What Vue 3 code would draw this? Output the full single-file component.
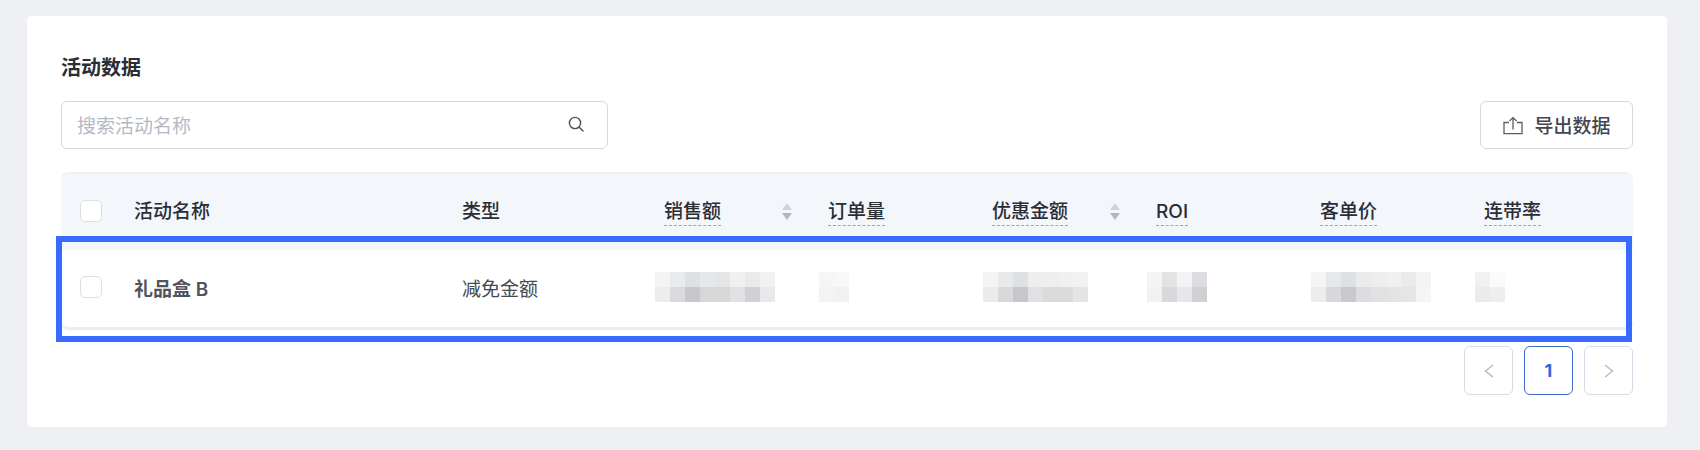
<template>
  <div class="page">
    <div class="card">
      <h2 class="title">活动数据</h2>

      <div class="toolbar">
        <div class="search">
          <span class="placeholder">搜索活动名称</span>
          <svg class="search-icon" width="20" height="20" viewBox="0 0 20 20" fill="none">
            <circle cx="9" cy="9" r="5.6" stroke="#4b4f58" stroke-width="1.4" />
            <path d="M13.2 13.2L17 17" stroke="#4b4f58" stroke-width="1.4" stroke-linecap="round" />
          </svg>
        </div>
        <button class="export-btn">
          <svg width="20" height="19" viewBox="0 0 20 19" fill="none">
            <path d="M6 6.5H1v11.2h18V6.5h-5" stroke="#5a5e67" stroke-width="1.3" />
            <path d="M10 13.5V1.6M6.4 5l3.6-3.4L13.6 5" stroke="#5a5e67" stroke-width="1.3" />
          </svg>
          <span class="export-label">导出数据</span>
        </button>
      </div>

      <div class="table">
        <div class="row head">
          <div class="cell-check"><span class="checkbox"></span></div>
          <div class="plain">活动名称</div>
          <div class="plain">类型</div>
          <div v-for="col in columns" :key="col.label" class="metric">
            <span class="dashed">{{ col.label }}</span>
            <span v-if="col.sort" class="sort">
              <i class="up"></i>
              <i class="down"></i>
            </span>
          </div>
        </div>

        <div class="row body">
          <div class="cell-check"><span class="checkbox"></span></div>
          <div class="name">礼品盒 B</div>
          <div class="type">减免金额</div>
          <div v-for="col in columns" :key="col.label" class="blur-cell">
            <div class="mosaic" :style="{ gridTemplateColumns: `repeat(${col.top.length}, 15px)` }">
              <span v-for="(c, i) in col.top.concat(col.bottom)" :key="i" :style="{ background: c }"></span>
            </div>
          </div>
        </div>

        <div class="highlight"></div>
      </div>

      <div class="pager">
        <button class="page-btn">
          <svg width="12" height="16" viewBox="0 0 12 16" fill="none">
            <path d="M10 2L2.5 8l7.5 6" stroke="#b9bcc8" stroke-width="1.5" />
          </svg>
        </button>
        <button class="page-btn current">1</button>
        <button class="page-btn">
          <svg width="12" height="16" viewBox="0 0 12 16" fill="none">
            <path d="M2 2l7.5 6L2 14" stroke="#b9bcc8" stroke-width="1.5" />
          </svg>
        </button>
      </div>
    </div>
  </div>
</template>

<script setup>
const columns = [
  {
    label: '销售额',
    sort: true,
    top: ['#f4f4f5', '#e9eaeb', '#dfe0e2', '#e6e7e8', '#e4e5e6', '#f0f0f1', '#e9eaeb', '#f1f1f2'],
    bottom: ['#ededee', '#d9dadc', '#c7c8cb', '#d6d7d9', '#d6d7d9', '#e0e1e2', '#d0d1d4', '#e8e9ea']
  },
  {
    label: '订单量',
    top: ['#f6f6f6', '#f8f8f8'],
    bottom: ['#f3f3f4', '#f1f1f2']
  },
  {
    label: '优惠金额',
    sort: true,
    top: ['#f4f4f5', '#e8e9ea', '#dfe0e2', '#eeeeef', '#eeeeef', '#f0f0f1', '#f1f1f2'],
    bottom: ['#ebebec', '#d8d9db', '#c6c7ca', '#e0e1e2', '#dadbdd', '#dadbdd', '#e3e4e5']
  },
  {
    label: 'ROI',
    top: ['#f4f4f5', '#e2e3e5', '#f3f3f4', '#dcdde0'],
    bottom: ['#f0f1f1', '#d8d9dc', '#e6e7e8', '#cfd0d3']
  },
  {
    label: '客单价',
    top: ['#f5f5f6', '#e7e8e9', '#dfe0e2', '#eaebec', '#eeeeef', '#f0f0f1', '#e9eaeb', '#f3f3f4'],
    bottom: ['#ededee', '#d7d8da', '#c8c9cc', '#dcdde0', '#e0e1e2', '#e2e3e4', '#e4e5e6', '#f5f5f6']
  },
  {
    label: '连带率',
    top: ['#f1f1f2', '#fafafa'],
    bottom: ['#ebebec', '#eeeeef']
  }
]
</script>

<style>
body {
  background: #eef0f4;
}
</style>

<style scoped>
.page {
  width: 1700px;
  height: 450px;
  box-sizing: border-box;
  padding: 16px 33px 23px 27px;
  font-family: Inter, "Noto Sans CJK SC", sans-serif;
}

.card {
  height: 411px;
  box-sizing: border-box;
  background: #fff;
  border-radius: 5px;
  padding: 38px 34px 0;
}

.title {
  margin: 0;
  height: 28px;
  line-height: 28px;
  font-size: 20px;
  font-weight: 700;
  color: #2a2d34;
}

.toolbar {
  display: flex;
  justify-content: space-between;
  margin-top: 19px;
}

.search {
  width: 547px;
  height: 48px;
  box-sizing: border-box;
  display: flex;
  align-items: center;
  justify-content: space-between;
  padding: 0 21px 2px 15px;
  border: 1px solid #d5d8e0;
  border-radius: 6px;
}

.placeholder {
  font-size: 19px;
  color: #b5b9c6;
}

.export-btn {
  width: 153px;
  height: 48px;
  box-sizing: border-box;
  display: flex;
  align-items: center;
  justify-content: center;
  gap: 11px;
  padding: 0 0 0 1px;
  background: #fff;
  border: 1px solid #d5d8e0;
  border-radius: 6px;
  font-family: inherit;
  font-size: 19px;
  font-weight: 500;
  color: #43474f;
}

.export-label {
  margin-bottom: 2px;
}

.table {
  position: relative;
  margin-top: 23px;
  width: 1572px;
  border-radius: 8px;
  box-shadow: 0 1px 1px rgba(30, 40, 60, 0.1);
}

.row {
  display: grid;
  grid-template-columns: 74px 328px 201px repeat(5, 164px) 149px;
  align-items: center;
}

.head {
  height: 78px;
  background: #f3f6fb;
  border-radius: 8px 8px 0 0;
  border-top: 2px solid #eff1f5;
  box-sizing: border-box;
  align-items: start;
  padding-top: 26px;
  color: #2a2d34;
  font-weight: 500;
}

.body {
  height: 79px;
  box-sizing: border-box;
  padding-bottom: 3px;
  border-bottom: 2px solid #eceef1;
  border-radius: 0 0 8px 8px;
  color: #454952;
}

.cell-check {
  padding-left: 19px;
  display: flex;
}

.checkbox {
  width: 22px;
  height: 22px;
  box-sizing: border-box;
  background: #fff;
  border: 1px solid #dcdfe6;
  border-radius: 5px;
}

.plain,
.metric {
  line-height: 24px;
  font-size: 19px;
}

.plain {
  margin-left: -1px;
}

.metric {
  position: relative;
}

.dashed {
  display: inline-block;
  height: 25px;
  border-bottom: 1px dashed #a0a4ac;
}

.sort {
  position: absolute;
  left: 118px;
  top: 3px;
  display: flex;
  flex-direction: column;
  gap: 3px;
}

.sort i {
  width: 0;
  height: 0;
  border-left: 5px solid transparent;
  border-right: 5px solid transparent;
}

.sort .up {
  border-bottom: 7px solid #d2d4d9;
}

.sort .down {
  border-top: 7px solid #b4b6bc;
}

.name {
  margin-left: -1px;
  font-size: 19px;
  font-weight: 600;
  color: #50545d;
}

.type {
  margin-left: -1px;
  font-size: 19px;
}

.blur-cell {
  margin-left: -9px;
}

.mosaic {
  display: grid;
  grid-auto-rows: 15px;
}

.highlight {
  position: absolute;
  left: -5px;
  top: 64px;
  width: 1576px;
  height: 106px;
  box-sizing: border-box;
  border: 6px solid #376bff;
}

.pager {
  display: flex;
  justify-content: flex-end;
  gap: 11px;
  margin-top: 17px;
  width: 1572px;
}

.page-btn {
  width: 49px;
  height: 49px;
  box-sizing: border-box;
  display: flex;
  align-items: center;
  justify-content: center;
  padding: 0;
  background: #fff;
  border: 1px solid #d8dbe6;
  border-radius: 6px;
  font-family: inherit;
  font-size: 18px;
  font-weight: 700;
}

.current {
  color: #3a66d6;
  border-color: #3f69c8;
}
</style>
